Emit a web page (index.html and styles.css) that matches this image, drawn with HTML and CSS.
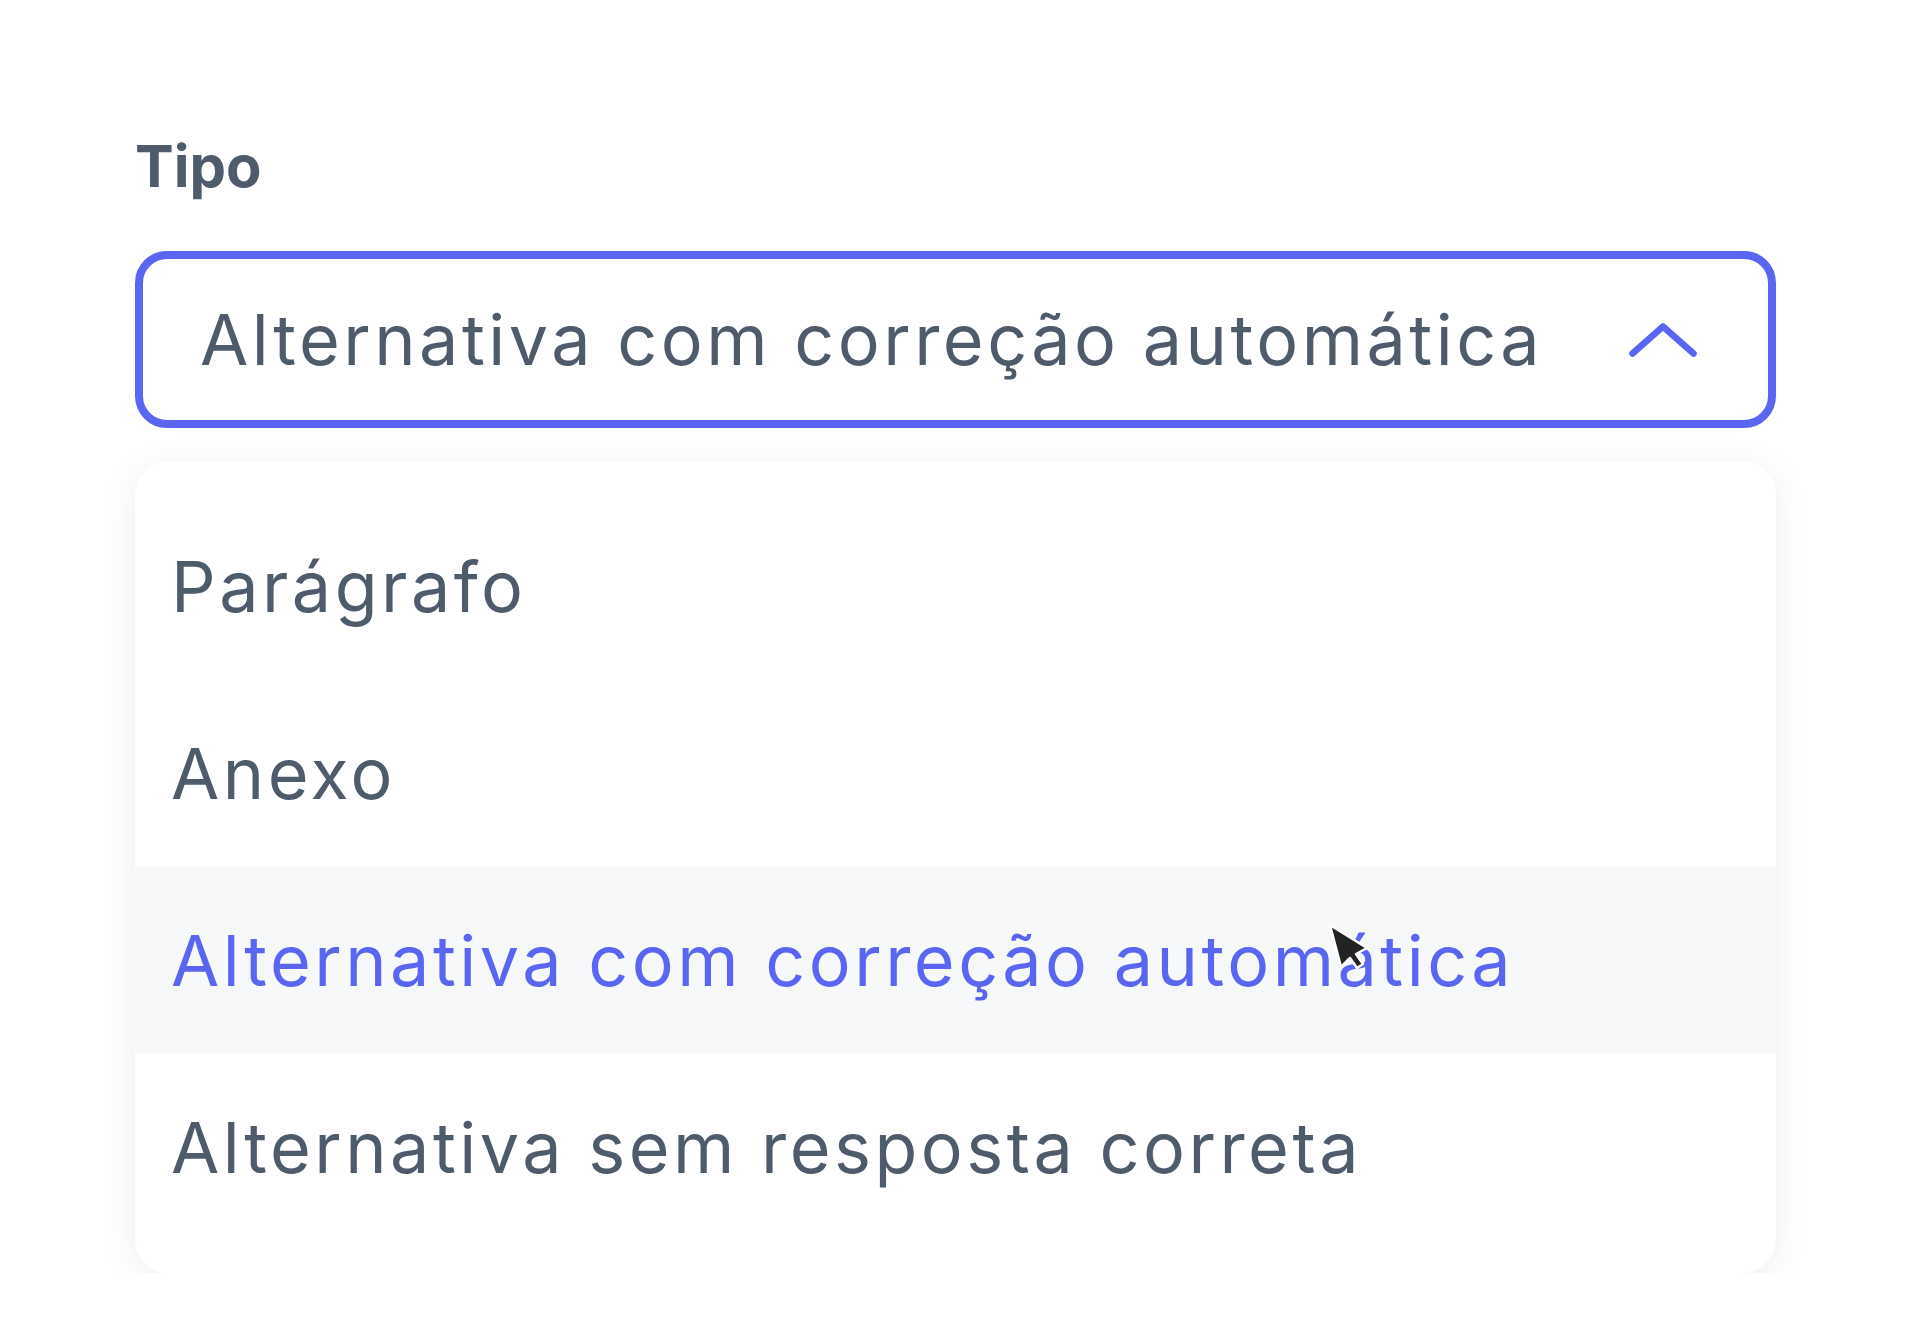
FILE: index.html
```html
<!DOCTYPE html>
<html>
<head>
    <title>Tipo</title>
    <link rel="stylesheet" href="styles.css">
</head>
<body>
    <div class="field">
        <label class="field-label">Tipo</label>
        <div class="select">
            <span class="select-value">Alternativa com correção automática</span>
            <svg class="chevron" width="68" height="34" viewBox="0 0 68 34">
                <path d="M3.5 30.5 L34 3.5 L64.5 30.5" fill="none" stroke="#5a66f1" stroke-width="6.5" stroke-linecap="round" stroke-linejoin="round"/>
            </svg>
        </div>
        <ul class="options">
            <li class="option">Parágrafo</li>
            <li class="option">Anexo</li>
            <li class="option selected">Alternativa com correção automática</li>
            <li class="option">Alternativa sem resposta correta</li>
        </ul>
    </div>
    <svg class="cursor" width="46" height="52" viewBox="0 0 46 52">
        <path d="M3 3 L14 45 L23 36 L30 46 L36 42 L29 32 L40 26 Z" fill="#222325" stroke="#ffffff" stroke-width="2.5" stroke-linejoin="round"/>
    </svg>
</body>
</html>
```

FILE: styles.css
```css
body {
    margin: 0;
    background-color: #ffffff;
    font-family: Inter, "Open Sans", sans-serif;
    color: #4d5b6b;
}
.field {
    width: 1641px;
    margin-left: 135px;
    padding-top: 137px;
}
.field-label {
    display: block;
    font-size: 58px;
    line-height: 58px;
    font-weight: 700;
    margin-bottom: 56px;
}
.select {
    display: flex;
    align-items: center;
    justify-content: space-between;
    box-sizing: border-box;
    height: 177px;
    padding: 0 71px 0 57px;
    border: 8px solid #5a66f1;
    border-radius: 32px;
}
.select-value {
    font-size: 70px;
    line-height: 1;
    letter-spacing: 0.05em;
}
.chevron {
    display: block;
}
.options {
    list-style: none;
    margin: 33px 0 0 0;
    padding: 32px 0;
    background-color: #ffffff;
    border-radius: 34px;
    box-shadow: 0 6px 36px rgba(0, 0, 0, 0.07);
}
.option {
    display: flex;
    align-items: center;
    height: 187px;
    padding-left: 36px;
    font-size: 70px;
    line-height: 1;
    letter-spacing: 0.05em;
}
.option.selected {
    background-color: #f7f8fa;
    color: #5a66f1;
}
.cursor {
    position: absolute;
    left: 1327px;
    top: 922px;
}
```
